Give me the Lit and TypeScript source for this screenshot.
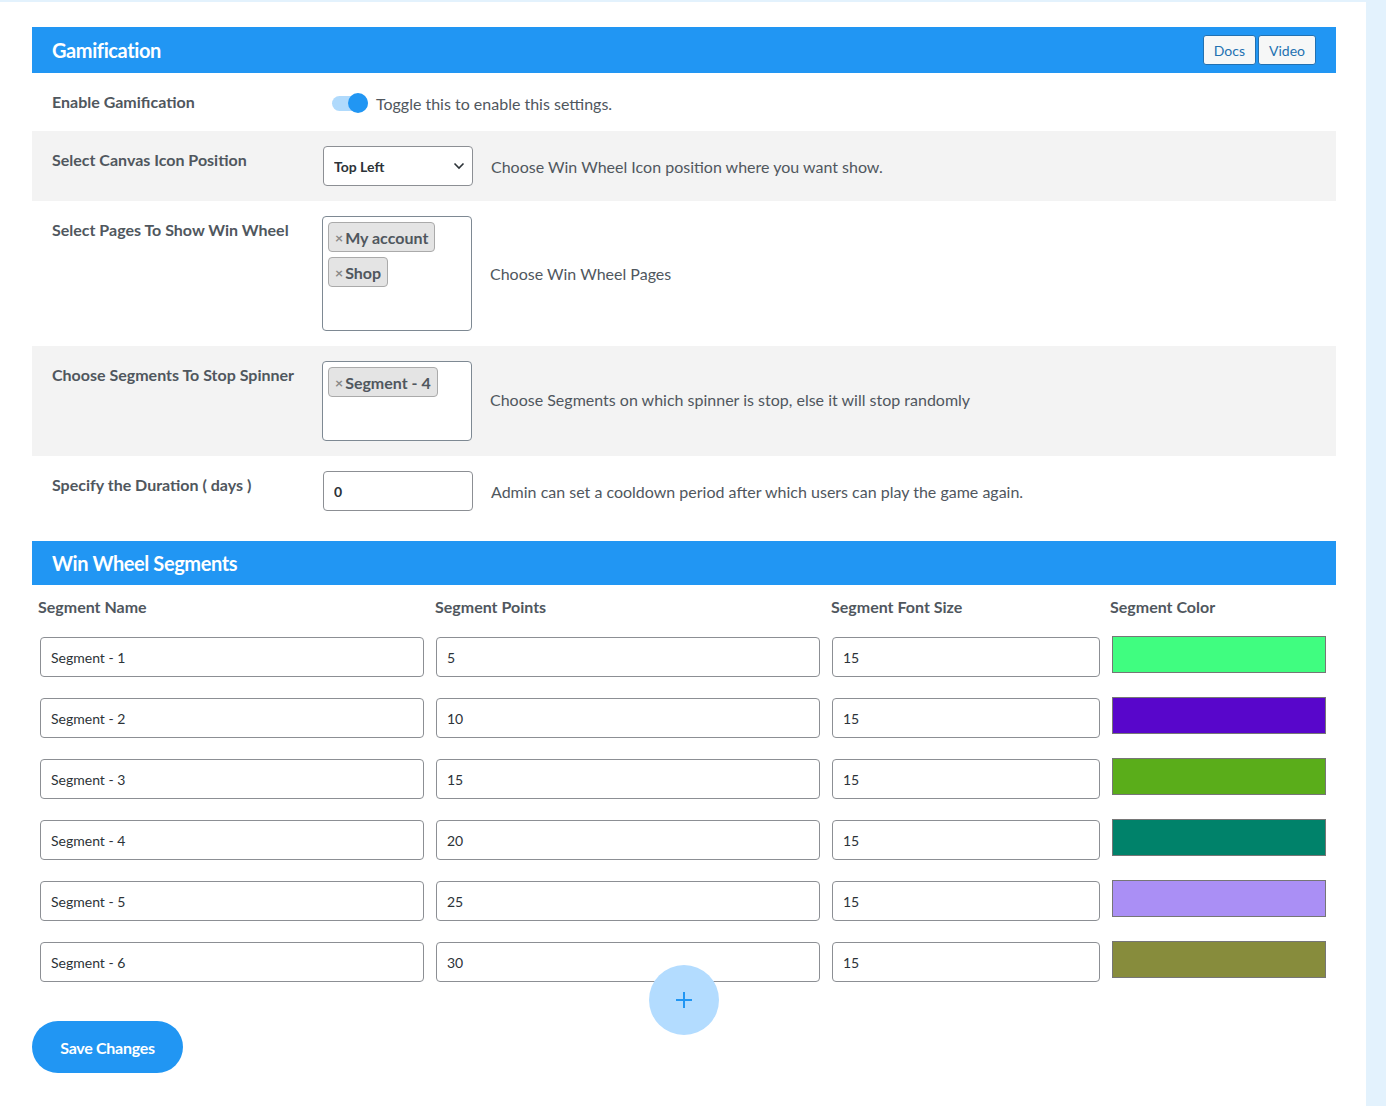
import { LitElement, html, css } from 'lit';
import { customElement } from 'lit/decorators.js';

const segments = [
  { name: 'Segment - 1', points: '5', size: '15', color: '#40fd80' },
  { name: 'Segment - 2', points: '10', size: '15', color: '#5806cb' },
  { name: 'Segment - 3', points: '15', size: '15', color: '#5aad1a' },
  { name: 'Segment - 4', points: '20', size: '15', color: '#00826a' },
  { name: 'Segment - 5', points: '25', size: '15', color: '#aa8ff5' },
  { name: 'Segment - 6', points: '30', size: '15', color: '#878c3c' },
];

@customElement('app-root')
export class AppRoot extends LitElement {
  static styles = css`
    :host {
      display: block;
      height: 1106px;
      overflow: hidden;
      background: #e3f2fd;
      font-family: Lato, sans-serif;
      color: #50575e;
    }
    .panel {
      box-sizing: border-box;
      width: 1366px;
      height: 1104px;
      margin-top: 2px;
      padding: 25px 30px 0 32px;
      background: #fff;
    }
    .bar {
      display: flex;
      align-items: center;
      justify-content: space-between;
      box-sizing: border-box;
      padding: 0 20px;
      background: #2196f3;
      color: #fff;
      font-size: 20px;
      font-weight: 700;
      letter-spacing: -0.4px;
    }
    .bar.main { height: 46px; }
    .bar.sub { height: 44px; margin-top: 15px; }
    .links { display: flex; gap: 2px; }
    .link {
      box-sizing: border-box;
      display: flex;
      align-items: center;
      height: 30px;
      padding: 0 10px;
      border: 1px solid #2271b1;
      border-radius: 3px;
      background: #f6f7f7;
      color: #2271b1;
      font-size: 14px;
      font-weight: 400;
      letter-spacing: 0;
    }
    .row {
      display: flex;
      box-sizing: border-box;
      font-size: 16px;
    }
    .row.shade { background: #f3f3f3; }
    .row-label {
      box-sizing: border-box;
      flex: 0 0 290px;
      padding-left: 20px;
      font-weight: 700;
      line-height: 20px;
    }
    .row-body { display: flex; align-items: center; }
    .r1 { height: 58px; }
    .r1 .row-label { padding-top: 19px; }
    .r1 .row-body { gap: 8px; margin-left: 10px; height: 60px; }
    .r2 { height: 70px; padding-top: 15px; }
    .r2 .row-label { padding-top: 4px; flex-basis: 291px; }
    .r3 { height: 145px; padding-top: 15px; }
    .r3 .row-label { padding-top: 4px; }
    .r4 { height: 110px; padding-top: 15px; }
    .r4 .row-label { padding-top: 4px; }
    .r5 { height: 70px; padding-top: 15px; }
    .r5 .row-label { padding-top: 4px; flex-basis: 291px; }
    .toggle {
      position: relative;
      width: 36px;
      height: 15px;
      border-radius: 8px;
      background: #b0dafc;
    }
    .knob {
      position: absolute;
      right: 0;
      top: -2.5px;
      width: 20px;
      height: 20px;
      border-radius: 50%;
      background: #2196f3;
    }
    .select-wrap { position: relative; width: 150px; height: 40px; margin-right: 18px; }
    select,
    input {
      box-sizing: border-box;
      display: block;
      height: 40px;
      padding: 0 10px;
      border: 1px solid #8c8f94;
      border-radius: 4px;
      background: #fff;
      color: #2c3338;
      font: 400 14px Lato, sans-serif;
      outline: none;
      appearance: none;
    }
    select { width: 100%; font-weight: 700; }
    .chevron {
      position: absolute;
      right: 8px;
      top: 16px;
      width: 12px;
      height: 8px;
    }
    .num { width: 150px; margin-right: 18px; font-weight: 700; }
    .tags {
      box-sizing: border-box;
      flex: none;
      width: 150px;
      margin-right: 18px;
      padding: 5px;
      border: 1px solid #7e8993;
      border-radius: 4px;
      background: #fff;
    }
    .tag {
      box-sizing: border-box;
      display: flex;
      align-items: center;
      width: fit-content;
      height: 30px;
      margin-bottom: 5px;
      padding: 0 6px;
      border: 1px solid #aaa;
      border-radius: 4px;
      background: #e4e4e4;
      font-weight: 700;
    }
    .tag .x { margin-right: 2px; color: #888; font-size: 14px; font-weight: 700; }
    .table {
      display: grid;
      grid-template-columns: 384px 384px 268px 214px;
      column-gap: 12px;
      padding-left: 8px;
    }
    .th {
      margin: 0 0 0 -2px;
      height: 52px;
      padding-top: 12px;
      box-sizing: border-box;
      font-size: 16px;
      font-weight: 700;
      line-height: 20px;
    }
    .th:nth-child(2), .th:nth-child(3) { margin-left: -1px; }
    .th:nth-child(4) { margin-left: -13px; padding-left: 11px; }
    .cell { height: 61px; }
    .cell input { width: 100%; }
    .swatch {
      box-sizing: border-box;
      width: 214px;
      height: 37px;
      margin-top: -1px;
      border: 1px solid #767676;
    }
    .table-wrap { position: relative; }
    .add {
      position: absolute;
      left: 617px;
      top: 380px;
      display: flex;
      align-items: center;
      justify-content: center;
      width: 70px;
      height: 70px;
      border-radius: 50%;
      background: #b3dcff;
    }
    .save {
      display: flex;
      align-items: center;
      justify-content: center;
      width: 151px;
      height: 52px;
      margin-top: 18px;
      border-radius: 26px;
      background: #2196f3;
      color: #fff;
      font-size: 16px;
      font-weight: 700;
      letter-spacing: -0.3px;
    }
  `;

  render() {
    return html`
      <div class="panel">
        <div class="bar main">
          <span>Gamification</span>
          <div class="links">
            <span class="link">Docs</span>
            <span class="link">Video</span>
          </div>
        </div>

        <div class="row r1">
          <div class="row-label">Enable Gamification</div>
          <div class="row-body">
            <div class="toggle"><div class="knob"></div></div>
            <span>Toggle this to enable this settings.</span>
          </div>
        </div>

        <div class="row r2 shade">
          <div class="row-label">Select Canvas Icon Position</div>
          <div class="select-wrap">
            <select><option>Top Left</option></select>
            <svg class="chevron" viewBox="0 0 12 8" fill="none" stroke="#2c3338" stroke-width="1.6">
              <path d="M1.5 1.5 6 6l4.5-4.5" />
            </svg>
          </div>
          <div class="row-body" style="height:40px">Choose Win Wheel Icon position where you want show.</div>
        </div>

        <div class="row r3">
          <div class="row-label">Select Pages To Show Win Wheel</div>
          <div class="tags" style="height:115px">
            <div class="tag"><span class="x">×</span>My account</div>
            <div class="tag"><span class="x">×</span>Shop</div>
          </div>
          <div class="row-body" style="height:115px">Choose Win Wheel Pages</div>
        </div>

        <div class="row r4 shade">
          <div class="row-label">Choose Segments To Stop Spinner</div>
          <div class="tags" style="height:80px">
            <div class="tag"><span class="x">×</span>Segment - 4</div>
          </div>
          <div class="row-body" style="height:76px">Choose Segments on which spinner is stop, else it will stop randomly</div>
        </div>

        <div class="row r5">
          <div class="row-label">Specify the Duration ( days )</div>
          <input class="num" .value=${'0'} />
          <div class="row-body" style="height:40px">Admin can set a cooldown period after which users can play the game again.</div>
        </div>

        <div class="bar sub">Win Wheel Segments</div>

        <div class="table-wrap">
          <div class="table">
            <div class="th">Segment Name</div>
            <div class="th">Segment Points</div>
            <div class="th">Segment Font Size</div>
            <div class="th">Segment Color</div>
            ${segments.map(
              (s) => html`
                <div class="cell"><input .value=${s.name} /></div>
                <div class="cell"><input .value=${s.points} /></div>
                <div class="cell"><input .value=${s.size} /></div>
                <div class="cell"><div class="swatch" style="background:${s.color}"></div></div>
              `,
            )}
          </div>
          <div class="add">
            <svg width="16" height="16" viewBox="0 0 16 16" stroke="#2196f3" stroke-width="2">
              <path d="M8 0v16M0 8h16" />
            </svg>
          </div>
        </div>

        <div class="save">Save Changes</div>
      </div>
    `;
  }
}
